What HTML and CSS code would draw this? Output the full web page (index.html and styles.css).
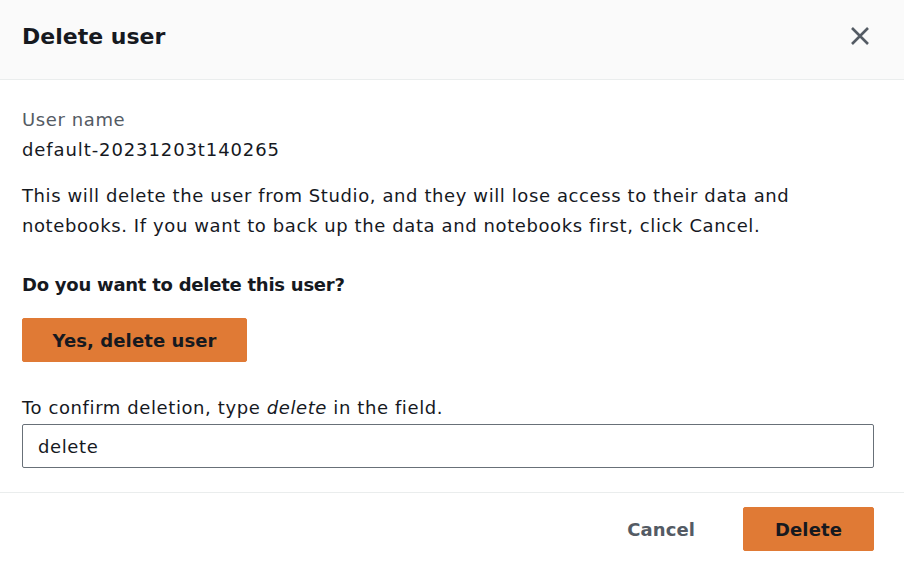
FILE: index.html
```html
<!DOCTYPE html>
<html lang="en">
<head>
<meta charset="utf-8">
<title>Delete user</title>
<link rel="stylesheet" href="styles.css">
</head>
<body>
<div class="modal">
  <header class="modal-header">
    <h1 class="title">Delete user</h1>
    <button class="close" aria-label="Close">
      <svg width="20" height="20" viewBox="0 0 20 20"><path d="M2 2 L18 18 M18 2 L2 18" stroke="#545b64" stroke-width="2.6" fill="none"/></svg>
    </button>
  </header>
  <main class="modal-body">
    <div class="field">
      <div class="label">User name</div>
      <div class="value">default-20231203t140265</div>
    </div>
    <p class="text">This will delete the user from Studio, and they will lose access to their data and notebooks. If you want to back up the data and notebooks first, click Cancel.</p>
    <p class="question">Do you want to delete this user?</p>
    <button class="btn btn-primary yes">Yes, delete user</button>
    <label class="confirm-label" for="confirm">To confirm deletion, type <em>delete</em> in the field.</label>
    <input id="confirm" class="input" type="text" value="delete">
  </main>
  <footer class="modal-footer">
    <button class="btn btn-link">Cancel</button>
    <button class="btn btn-primary del">Delete</button>
  </footer>
</div>
</body>
</html>
```
FILE: styles.css
```css
* { box-sizing: border-box; }
html, body { margin: 0; padding: 0; background: #ffffff; }
body {
  font-family: "DejaVu Sans", "Open Sans", Arial, sans-serif;
  color: #16191f;
  width: 904px;
  height: 564px;
  overflow: hidden;
}
.modal { display: flex; flex-direction: column; height: 564px; }
.modal-header {
  height: 80px;
  background: #fafafa;
  border-bottom: 1px solid #eaeded;
  display: flex;
  align-items: center;
  justify-content: space-between;
  padding: 0 34px 0 22px;
}
.title {
  margin: 0;
  font-size: 22px;
  font-weight: 700;
  line-height: 30px;
  margin-top: -6px;
  color: #16191f;
}
.close {
  background: none;
  border: 0;
  padding: 0;
  width: 20px;
  height: 20px;
  margin-top: -7px;
  display: flex;
}
.modal-body {
  padding: 25px 30px 0 22px;
  font-size: 18px;
  line-height: 30px;
  letter-spacing: 0.6px;
}
.label { color: #545b64; }
.value { color: #16191f; letter-spacing: 0.9px; }
.text { margin: 16px 0 0; }
.question { margin: 29px 0 0; font-weight: 700; letter-spacing: -0.25px; }
.btn {
  font-family: inherit;
  font-size: 18px;
  font-weight: 700;
  border-radius: 2px;
  cursor: pointer;
  letter-spacing: 0.1px;
}
.btn-primary {
  background: #e07a35;
  border: 1px solid #e07a35;
  color: #16191f;
  height: 44px;
}
.yes { margin-top: 18px; width: 225px; display: block; }
.confirm-label { display: block; margin-top: 31px; margin-bottom: 1px; }
.input {
  display: block;
  width: 852px;
  height: 44px;
  border: 1.5px solid #687078;
  border-radius: 2px;
  font-family: inherit;
  font-size: 18px;
  letter-spacing: 0.6px;
  color: #16191f;
  padding: 0 15px;
  margin-top: 0;
}
.modal-footer {
  margin-top: 24px;
  border-top: 1px solid #eaeded;
  display: flex;
  justify-content: flex-end;
  align-items: center;
  padding: 14px 30px 0 22px;
  gap: 48px;
}
.btn-link {
  background: none;
  border: 0;
  color: #545b64;
  padding: 0;
}
.del { width: 131px; }
```
